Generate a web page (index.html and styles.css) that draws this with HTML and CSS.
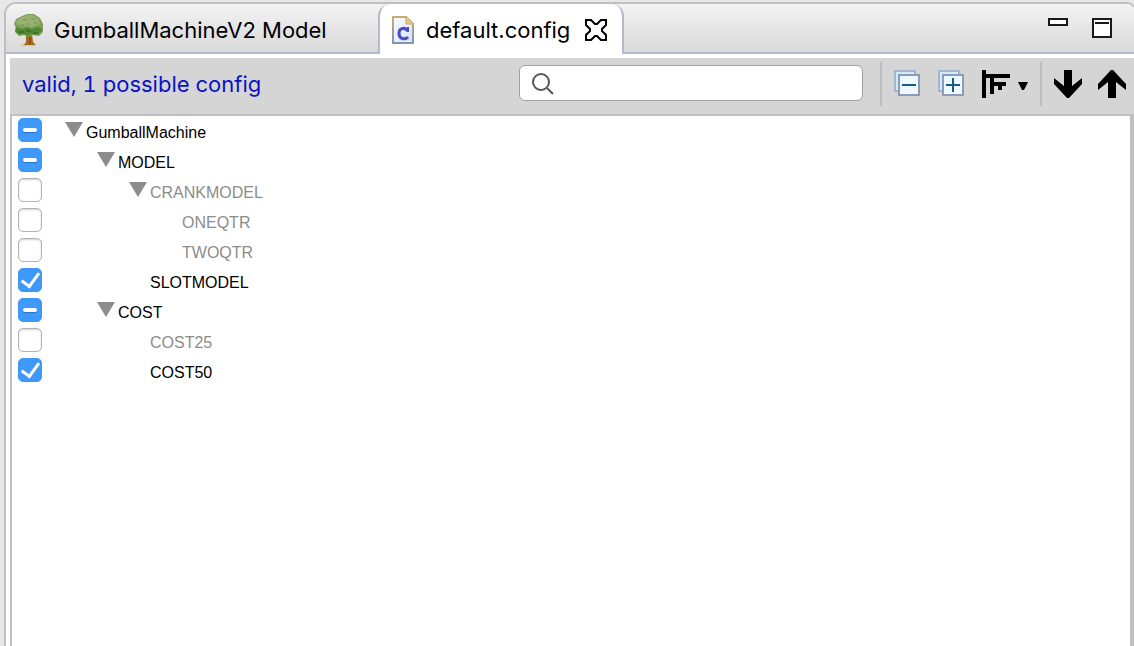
FILE: index.html
```html
<!DOCTYPE html>
<html lang="en">
<head>
<meta charset="utf-8">
<meta name="viewport" content="width=device-width, initial-scale=1">
<title>default.config</title>
<link rel="stylesheet" href="styles.css">
</head>
<body>
<main class="panel">
  <header class="tabbar">
    <div class="tabs" role="tablist">
      <button class="tab" type="button" role="tab" aria-selected="false">
        <svg class="tab-icon" width="32" height="34" viewBox="0 0 32 34" aria-hidden="true">
          <path d="M8 31h14v2H8z" fill="#cfcaa6"/>
          <path d="M13 20h6l1 9 3 3H11l2-3z" fill="#a8691f"/>
          <path d="M16 21h2v10h-2z" fill="#8a5114"/>
          <path d="M9 3l5-2h7l6 4 3 6v8l-4 4-6-1-4 2-5-2-5 1-4-4 1-4-2-4 2-5z" fill="#7f9f58"/>
          <path d="M9 4l5-2h6l5 4 2 5-8 3-10-1-6-2 1-4z" fill="#98b070"/>
          <path d="M3 14l6 2 5-2 5 2 5-2 5 1-1 4-4 3-5-1-4 2-5-2-4 1-4-4z" fill="#4f8b35"/>
          <path d="M6 18h5v2H6zM13 17h5v2h-5zM20 19h5v2h-5z" fill="#3c7429"/>
          <path d="M10 6h4v2h-4zM18 5h4v2h-4zM7 11h4v2H7zM21 9h4v2h-4zM14 10h3v2h-3z" fill="#84a45c"/>
        </svg>
        <span class="tab-title">GumballMachineV2 Model</span>
      </button>
      <div class="tab tab-active">
        <svg class="file-icon" width="24" height="30" viewBox="0 0 24 30" aria-hidden="true">
          <defs>
            <linearGradient id="edge" x1="0" y1="0" x2="0" y2="1"><stop offset="0" stop-color="#c4ad74"/><stop offset="1" stop-color="#8094c0"/></linearGradient>
            <linearGradient id="sheet" x1="0" y1="0" x2="1" y2="1"><stop offset="0" stop-color="#fbfcff"/><stop offset="1" stop-color="#d5e2f7"/></linearGradient>
          </defs>
          <path d="M2 2h13l7 7v19H2z" fill="url(#sheet)" stroke="url(#edge)" stroke-width="2"/>
          <path d="M15 1v8h8z" fill="#e4c888" stroke="#c9aa66"/>
          <path d="M16.500 16C14.500 12 8 12.500 8 18.500S14.500 25 17 22" fill="none" stroke="#4a4cc8" stroke-width="3"/>
          <path d="M16 12h2v5h-2z" fill="#4a4cc8"/>
        </svg>
        <button class="tab-name" type="button" role="tab" aria-selected="true">default.config</button>
        <button class="tab-close" type="button" aria-label="Close">
          <svg width="22" height="22" viewBox="0 0 22 22" aria-hidden="true"><path d="M1 1h5l4 4h2l4-4h5v5l-4 4v2l4 4v5h-5l-4-4h-2l-4 4H1v-5l4-4v-2L1 6z" fill="#fff" stroke="#000" stroke-width="2"/></svg>
        </button>
      </div>
    </div>
    <div class="window-tools">
      <button class="window-button" type="button" aria-label="Minimize">
        <svg width="20" height="20" viewBox="0 0 20 20" aria-hidden="true"><path d="M1 1h18v6H1z" fill="#fff" stroke="#1a1a1a" stroke-width="2"/></svg>
      </button>
      <button class="window-button" type="button" aria-label="Maximize">
        <svg width="20" height="20" viewBox="0 0 20 20" aria-hidden="true"><path d="M1 1h18v18H1z" fill="#fff" stroke="#1a1a1a" stroke-width="2"/><path d="M3 5h14" stroke="#1a1a1a" stroke-width="2"/></svg>
      </button>
    </div>
  </header>

  <section class="editor">
    <div class="toolbar">
      <p class="status">valid, 1 possible configurations</p>
      <div class="search">
        <svg class="search-icon" width="24" height="24" viewBox="0 0 24 24" aria-hidden="true"><circle cx="10" cy="11" r="8" fill="none" stroke="#555" stroke-width="2"/><path d="M16 17l6 6" stroke="#555" stroke-width="2"/></svg>
        <input class="search-input" type="text" aria-label="Search">
      </div>
      <span class="separator"></span>
      <button class="tool" type="button" aria-label="Collapse all">
        <svg width="28" height="28" viewBox="0 0 28 28" aria-hidden="true"><path d="M1 1h20v20H1z" fill="#d2ebf6" stroke="#a3b6cd" stroke-width="2"/><path d="M5 5h20v20H5z" fill="#eef9ff" stroke="#8c9cb8" stroke-width="2"/><path d="M8 15h14" stroke="#175987" stroke-width="2"/></svg>
      </button>
      <button class="tool" type="button" aria-label="Expand all">
        <svg width="28" height="28" viewBox="0 0 28 28" aria-hidden="true"><path d="M1 1h20v20H1z" fill="#d2ebf6" stroke="#a3b6cd" stroke-width="2"/><path d="M5 5h20v20H5z" fill="#eef9ff" stroke="#8c9cb8" stroke-width="2"/><path d="M8 15h14M15 8v14" stroke="#175987" stroke-width="2"/></svg>
      </button>
      <button class="tool tool-menu" type="button" aria-label="Layout" aria-haspopup="menu">
        <svg width="50" height="28" viewBox="0 0 50 28" aria-hidden="true"><path d="M0 0h4v4h24v4H12v4h12v4h-4v4h-4v-4h-4v8H8V8H4v20H0z"/><path d="M36 12h10l-4 8h-2z"/></svg>
      </button>
      <span class="separator"></span>
      <button class="tool" type="button" aria-label="Next">
        <svg width="28" height="28" viewBox="0 0 28 28" aria-hidden="true"><path d="M10 0h8v16l10-8v6L15 28h-2L0 14V8l10 8z"/></svg>
      </button>
      <button class="tool" type="button" aria-label="Previous">
        <svg width="28" height="28" viewBox="0 0 28 28" aria-hidden="true"><path d="M10 28h8V12l10 8v-6L15 0h-2L0 14v6l10-8z"/></svg>
      </button>
    </div>

    <ul class="tree">
      <li class="row"><input class="check" type="checkbox" id="gumball" aria-checked="mixed"><span class="node level-0"><button class="twisty" type="button" aria-label="Collapse GumballMachine"></button><label for="gumball">GumballMachine</label></span></li>
      <li class="row"><input class="check" type="checkbox" id="model" aria-checked="mixed"><span class="node level-1"><button class="twisty" type="button" aria-label="Collapse MODEL"></button><label for="model">MODEL</label></span></li>
      <li class="row"><input class="check" type="checkbox" id="crankmodel"><span class="node level-2 muted"><button class="twisty" type="button" aria-label="Collapse CRANKMODEL"></button><label for="crankmodel">CRANKMODEL</label></span></li>
      <li class="row"><input class="check" type="checkbox" id="oneqtr"><span class="node level-3 leaf muted"><label for="oneqtr">ONEQTR</label></span></li>
      <li class="row"><input class="check" type="checkbox" id="twoqtr"><span class="node level-3 leaf muted"><label for="twoqtr">TWOQTR</label></span></li>
      <li class="row"><input class="check" type="checkbox" id="slotmodel" checked><span class="node level-2 leaf"><label for="slotmodel">SLOTMODEL</label></span></li>
      <li class="row"><input class="check" type="checkbox" id="cost" aria-checked="mixed"><span class="node level-1"><button class="twisty" type="button" aria-label="Collapse COST"></button><label for="cost">COST</label></span></li>
      <li class="row"><input class="check" type="checkbox" id="cost25"><span class="node level-2 leaf muted"><label for="cost25">COST25</label></span></li>
      <li class="row"><input class="check" type="checkbox" id="cost50" checked><span class="node level-2 leaf"><label for="cost50">COST50</label></span></li>
    </ul>
  </section>
</main>
</body>
</html>
```
FILE: styles.css
```css
* {
  box-sizing: border-box;
}

body {
  margin: 0;
  min-height: 100vh;
  display: flex;
  overflow: hidden;
  background: #e7e7e9;
  color: #000;
  font-family: Inter, "Noto Sans", sans-serif;
  font-size: 22px;
}

button {
  padding: 0;
  border: 0;
  background: none;
  color: inherit;
  font: inherit;
}

svg {
  display: block;
  flex: none;
}

.panel {
  flex: 1;
  min-width: 0;
  display: flex;
  flex-direction: column;
  margin: 2px -4px 0 4px;
  border: 2px solid #bfbfbd;
  border-bottom: 0;
  border-radius: 12px 12px 0 0;
  overflow: hidden;
  background: #fff;
}

.tabbar {
  display: flex;
  justify-content: space-between;
  height: 50px;
  background: linear-gradient(#f3f3f3, #d8d8d8);
  box-shadow: inset 0 -2px #b4b9cc;
}

.tabs {
  display: flex;
}

.tab {
  display: flex;
  align-items: center;
  width: 372px;
  padding: 2px 7px 0;
  white-space: nowrap;
}

.tab-icon {
  margin-right: 9px;
}

.tab-active {
  width: 246px;
  padding: 2px 11px 0;
  border: 2px solid #b4b9cc;
  border-width: 0 2px;
  border-radius: 12px 12px 0 0;
  background: #fff;
}

.file-icon {
  margin-right: 11px;
}

.tab-close {
  margin-left: auto;
  margin-right: 4px;
}

.window-tools {
  display: flex;
  align-items: flex-start;
  gap: 24px;
  padding: 14px 24px 0 0;
}

.editor {
  flex: 1;
  display: flex;
  flex-direction: column;
  margin: 4px 2px 0 4px;
}

.toolbar {
  display: flex;
  align-items: flex-start;
  height: 56px;
  padding-left: 12px;
  background: #d5d5d5;
}

.status {
  width: 238px;
  margin: 10px 0 0;
  overflow: hidden;
  white-space: nowrap;
  font-variant-numeric: tabular-nums;
  line-height: 32px;
  color: #0a12c8;
}

.search {
  display: flex;
  align-items: center;
  width: 344px;
  height: 36px;
  margin: 7px 17px 0 auto;
  padding: 0 11px;
  border: 1px solid #a0a0a0;
  border-radius: 6px;
  background: #fff;
}

.search-input {
  flex: 1;
  min-width: 0;
  border: 0;
  outline: 0;
  background: none;
  font: inherit;
}

.separator {
  width: 2px;
  height: 44px;
  margin: 4px 4px 0 0;
  background: #bfbfbf;
}

.tool {
  display: flex;
  align-items: center;
  justify-content: center;
  width: 44px;
  height: 44px;
  margin-top: 4px;
}

.tool-menu {
  width: 66px;
}

.tree {
  flex: 1;
  margin: 0;
  padding: 0 0 0 6px;
  border: 2px solid #c0c0c0;
  border-width: 2px 4px 0 2px;
  list-style: none;
  font-family: "Liberation Sans", Arial, sans-serif;
  font-size: 16px;
}

.row {
  display: flex;
  align-items: flex-start;
  height: 30px;
  padding-top: 2px;
}

.check {
  display: grid;
  place-items: center;
  appearance: none;
  width: 24px;
  height: 24px;
  margin: 0;
  border: 1px solid #b4b4b4;
  border-radius: 5px;
  background: #fff;
  box-shadow: inset 0 1px 2px #d0d0d0;
}

.check:checked,
.check[aria-checked="mixed"] {
  border-color: #3c96f8;
  background: #3f99fb;
  box-shadow: none;
}

.check[aria-checked="mixed"]::before {
  content: "";
  width: 14px;
  height: 4px;
  border-radius: 2px;
  background: #fff;
  box-shadow: 0 1px 1px #2676cc;
}

.check:checked::before {
  content: "";
  width: 8px;
  height: 15px;
  margin-bottom: 4px;
  border: solid #fff;
  border-width: 0 3px 3px 0;
  transform: rotate(36deg);
}

.node {
  display: flex;
  align-items: flex-start;
  gap: 3px;
  margin-left: 23px;
}

.node label {
  padding-top: 2px;
  line-height: 26px;
}

.twisty {
  width: 18px;
  height: 15px;
  margin-top: 4px;
  background: #8c8c8c;
  clip-path: polygon(0 0, 100% 0, 50% 100%);
}

.leaf {
  padding-left: 21px;
}

.level-1 {
  margin-left: 55px;
}

.level-2 {
  margin-left: 87px;
}

.level-3 {
  margin-left: 119px;
}

.muted {
  color: #8c8c8c;
}
```
